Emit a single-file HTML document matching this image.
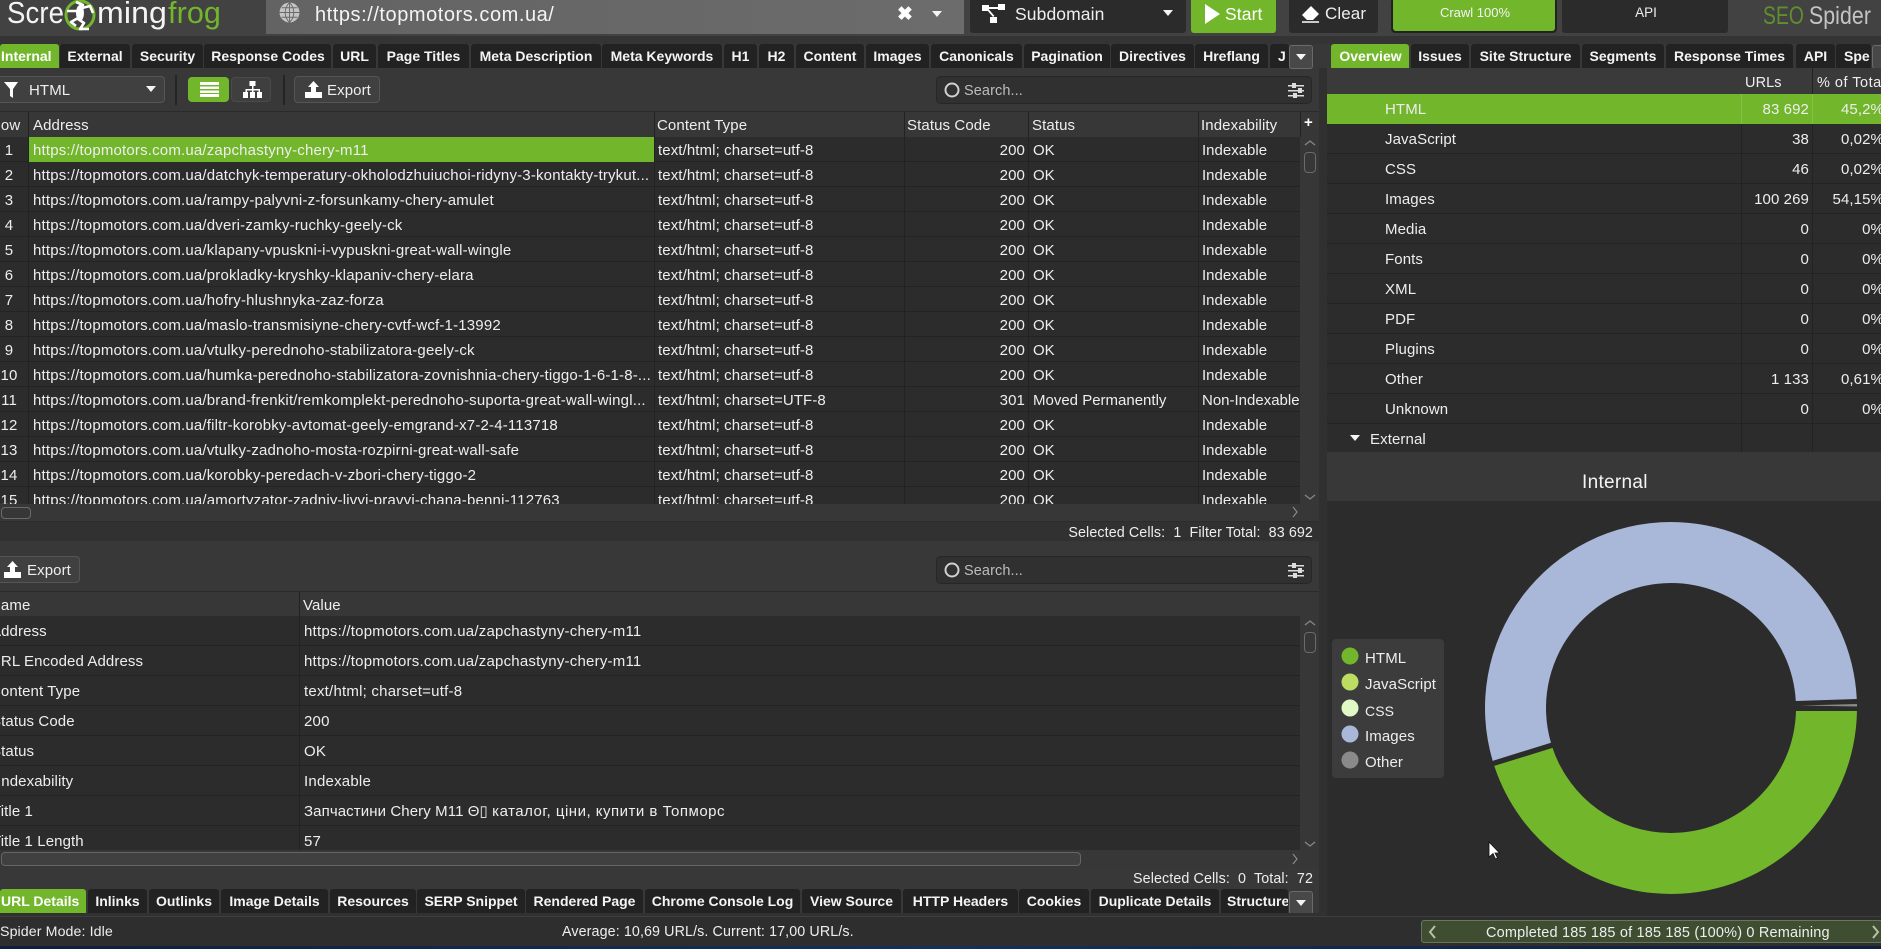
<!DOCTYPE html>
<html><head><meta charset="utf-8"><title>SEO Spider</title>
<style>
html,body{margin:0;padding:0;width:1881px;height:949px;overflow:hidden;background:#383838}
body{position:relative;font:15px/1 "Liberation Sans",sans-serif;color:#eee;letter-spacing:.1px}
div,span,svg{position:absolute;box-sizing:border-box}
span{white-space:nowrap}
b{font-weight:normal;letter-spacing:.5px}
.t{top:44px;height:24px;background:#222;border-radius:3px 3px 0 0;font-weight:bold;font-size:14px;line-height:25px;text-align:center;color:#f4f4f4;letter-spacing:0;overflow:hidden;white-space:nowrap}
.t.a{background:#72b62b;color:#fff}
.b{top:889px;line-height:24px}
.r{left:0;width:1300px;height:25px;background:#2c2c2c;border-bottom:1px solid #232323;line-height:27px}
.r span{top:0}
.n{left:0;width:18px;text-align:center}.ad{left:33px;letter-spacing:.18px}.ct{left:658px}.sc{left:960px;width:65px;text-align:right}.st{left:1033px;letter-spacing:0}.ix{left:1202px;letter-spacing:0}
.v{position:absolute;top:0;bottom:0;width:1px;background:#232323}
.h{line-height:28px;top:0}
.q{left:0;width:1300px;height:30px;background:#2c2c2c;border-bottom:1px solid #232323;line-height:32px}
.q span{top:0}
.q span.w{left:304px;letter-spacing:.22px}
.p{left:1327px;width:554px;height:30px;background:#2c2c2c;border-bottom:1px solid #232323;line-height:31px;overflow:hidden}
.p span{top:0}
.l{left:58px}.u{left:414px;width:68px;text-align:right}.c{left:485px;width:72px;text-align:right}
.btn{border:1px solid #555;border-radius:4px;background:#404040}
.dd{background:#2b2b2b;top:0;height:33px;border-radius:0 0 3px 3px}
.tri{width:0;height:0;border-left:5.5px solid transparent;border-right:5.5px solid transparent;border-top:6px solid #f4f4f4}
.mb{width:24px;height:24px;top:46px;background:#484848;border:1px solid #6a6a6a;border-radius:3px}
.lg{left:1365px;font-size:15px}
</style></head><body>

<!-- top bar -->
<div style="left:0;top:0;width:1881px;height:36px;background:#424242"></div>
<div style="left:0;top:36px;width:1881px;height:8px;background:#343434"></div>
<svg style="left:0;top:0" width="230" height="36" font-family="Liberation Sans" font-size="31">
<text x="7" y="23" fill="#f4f4f4" textLength="57" lengthAdjust="spacingAndGlyphs">Scre</text>
<text x="97" y="23" fill="#f4f4f4" textLength="70" lengthAdjust="spacingAndGlyphs">ming</text>
<text x="168" y="23" fill="#72b62b" textLength="53" lengthAdjust="spacingAndGlyphs">frog</text>
<circle cx="80" cy="15" r="14" fill="none" stroke="#72b62b" stroke-width="3"/>
<path d="M76 2L83 5L80 12L78 20M82 8L90 6L93 13M78 11L67 11M78 18L71 22L76 26M78 19L84 23L80 29L89 29" fill="none" stroke="#fff" stroke-width="2.6" stroke-linejoin="round"/>
<ellipse cx="80" cy="13" rx="4" ry="8" fill="#fff"/>
</svg>
<div style="left:266px;top:0;width:698px;height:34px;background:linear-gradient(90deg,#636363,#6c6c6c)"></div>
<svg style="left:279px;top:2px" width="21" height="21" viewBox="0 0 20 20" fill="none"><circle cx="10" cy="10" r="9.500" fill="#c4c4c4"/><path d="M10 .5v19M.5 10h19M2.500 5.500h15M2.500 14.500h15M10 .5c-5.500 5.500-5.500 13.500 0 19M10 .5c5.500 5.500 5.500 13.500 0 19" stroke="#6a6a6a" stroke-width=".9"/></svg>
<span style="left:315px;top:4px;font-size:20px;letter-spacing:.55px;line-height:23px;color:#f4f4f4">https://topmotors.com.ua/</span>
<span style="left:897px;top:5px;font-size:19px;font-weight:bold;line-height:20px;color:#fff">✖</span>
<div class="tri" style="left:932px;top:11px"></div>

<div class="dd" style="left:970px;width:216px"></div>
<svg style="left:982px;top:3px" width="26" height="20" viewBox="0 0 26 20" fill="#fff"><rect x="0" y="2" width="7" height="6"/><rect x="16" y="1" width="7" height="6"/><rect x="8" y="14" width="7" height="7"/><path d="M6 4h11v2H6zM5 7l6 7 1.500-1-6-7z"/></svg>
<span style="left:1015px;top:4px;font-size:17.5px;line-height:20px">Subdomain</span>
<div class="tri" style="left:1163px;top:10px"></div>

<div class="dd" style="left:1191px;width:85px;background:#72b62b"></div>
<svg style="left:1204px;top:4px" width="18" height="20"><path d="M1 0l15 10L1 20z" fill="#fff"/></svg>
<span style="left:1225px;top:4px;font-size:17.5px;line-height:20px;color:#fff">Start</span>
<div class="dd" style="left:1289px;width:89px"></div>
<svg style="left:1301px;top:5px" width="20" height="18" viewBox="0 0 20 18"><path d="M1 10L10 1l8 8-6 6H6z" fill="#fff"/><path d="M1 17h17" stroke="#fff" stroke-width="1.500"/></svg>
<span style="left:1325px;top:4px;font-size:17px;line-height:20px">Clear</span>
<div style="left:1391px;top:-2px;width:166px;height:35px;background:#222;border-radius:4px"></div>
<div style="left:1393px;top:0;width:162px;height:31px;background:#72b62b;border-radius:0 0 3px 3px;font-size:13px;line-height:26px;text-align:center;letter-spacing:0;color:#f4f4f4;padding-left:2px">Crawl 100%</div>
<div class="dd" style="left:1562px;width:166px;font-size:13.5px;line-height:26px;text-align:center;letter-spacing:0;padding-left:2px">API</div>
<svg style="left:1755px;top:0" width="126" height="36" font-family="Liberation Sans" font-size="25">
<text x="8" y="24" fill="#5f8f2e" textLength="41" lengthAdjust="spacingAndGlyphs">SEO</text>
<text x="54" y="24" fill="#c4c4c4" textLength="62" lengthAdjust="spacingAndGlyphs">Spider</text>
</svg>

<!-- left tabs -->
<div class="t a" style="left:0;width:59px;text-align:left;padding-left:1px">Internal</div>
<div class="t" style="left:60px;width:70px">External</div>
<div class="t" style="left:132px;width:71px">Security</div>
<div class="t" style="left:204px;width:127px;padding-left:1px">Response Codes</div>
<div class="t" style="left:333px;width:43px">URL</div>
<div class="t" style="left:378px;width:91px">Page Titles</div>
<div class="t" style="left:471px;width:130px">Meta Description</div>
<div class="t" style="left:602px;width:120px">Meta Keywords</div>
<div class="t" style="left:724px;width:33px">H1</div>
<div class="t" style="left:759px;width:35px">H2</div>
<div class="t" style="left:796px;width:68px">Content</div>
<div class="t" style="left:866px;width:63px">Images</div>
<div class="t" style="left:931px;width:91px">Canonicals</div>
<div class="t" style="left:1024px;width:86px">Pagination</div>
<div class="t" style="left:1111px;width:83px">Directives</div>
<div class="t" style="left:1195px;width:73px">Hreflang</div>
<div class="t" style="left:1270px;width:19px;text-align:left;padding-left:8px">J</div>
<div class="mb" style="left:1289px;top:45px"></div><div class="tri" style="left:1296px;top:54px"></div>

<!-- left toolbar -->
<div class="btn" style="left:-6px;top:76px;width:171px;height:27px"></div>
<svg style="left:4px;top:82px" width="16" height="16"><path d="M0 0h14L9 7v9L6 14V7z" fill="#fff"/></svg>
<span style="left:29px;top:82px;font-size:15px;line-height:18px">HTML</span>
<div class="tri" style="left:146px;top:86px"></div>
<div style="left:175px;top:75px;width:2px;height:30px;background:#242424"></div>
<div style="left:188px;top:77px;width:41px;height:25px;background:#72b62b;border-radius:4px"></div>
<svg style="left:200px;top:82px" width="19" height="15" fill="#fff"><rect width="19" height="3"/><rect y="4.500" width="19" height="2.500"/><rect y="8.500" width="19" height="2.500"/><rect y="12" width="19" height="3"/></svg>
<div class="btn" style="left:231px;top:77px;width:40px;height:25px;background:#3f3f3f;border-color:#4a4a4a"></div>
<svg style="left:243px;top:81px" width="19" height="17" fill="#fff"><rect x="6.500" y="0" width="6" height="5"/><rect x="0" y="11" width="5" height="6"/><rect x="7" y="11" width="5" height="6"/><rect x="14" y="11" width="5" height="6"/><path d="M9 5h1.500v3H17v3h-1.500V9.500h-5V11H9V9.500H4V11H2.500V8H9z"/></svg>
<div style="left:283px;top:75px;width:2px;height:30px;background:#242424"></div>
<div class="btn" style="left:294px;top:76px;width:86px;height:27px"></div>
<svg style="left:305px;top:81px" width="17" height="17" fill="#fff"><path d="M8.500 0L14 6h-3v6H6V6H3z"/><rect x="0" y="11" width="17" height="6"/></svg>
<span style="left:327px;top:82px;font-size:15px;line-height:18px">Export</span>
<div style="left:936px;top:76px;width:376px;height:28px;background:#303030;border:1px solid #262626;border-radius:5px"></div>
<svg style="left:944px;top:82px" width="16" height="16" fill="none" stroke="#d0d0d0" stroke-width="2"><circle cx="8" cy="8" r="6.500"/></svg>
<span style="left:964px;top:83px;font-size:14.500px;line-height:17px;color:#bdbdbd">Search...</span>
<svg style="left:1288px;top:83px" width="17" height="15" fill="#ddd"><rect y="2" width="16" height="1.500"/><rect x="4" y="0" width="4" height="5"/><rect y="7" width="16" height="1.500"/><rect x="10" y="5" width="4" height="5"/><rect y="12" width="16" height="1.500"/><rect x="5" y="10" width="4" height="5"/></svg>

<!-- main table header -->
<div style="left:0;top:111px;width:1319px;height:26px;background:#373737;border-top:1px solid #2a2a2a;overflow:hidden">
<span class="h" style="left:-10px">Row</span><span class="h" style="left:33px">Address</span><span class="h" style="left:657px">Content Type</span><span class="h" style="left:907px">Status Code</span><span class="h" style="left:1032px">Status</span><span class="h" style="left:1201px">Indexability</span>
<span class="h" style="left:1304px;font-weight:bold;font-size:15px;color:#fff;line-height:22px">+</span>
<i class="v" style="left:28px"></i><i class="v" style="left:654px"></i><i class="v" style="left:904px"></i><i class="v" style="left:1028px"></i><i class="v" style="left:1198px"></i><i class="v" style="left:1300px"></i>
</div>

<!-- main table rows -->
<div style="left:0;top:137px;width:1300px;height:367px;overflow:hidden">
<div class="r" style="top:0"><span class="n">1</span><div style="left:28px;top:0;width:626px;height:25px;background:#72b62b"></div><span class="ad">https://topmotors.com.ua/zapchastyny-chery-m11</span><span class="ct">text/html; charset=utf-8</span><span class="sc">200</span><span class="st">OK</span><span class="ix">Indexable</span></div>
<div class="r" style="top:25px"><span class="n">2</span><span class="ad">https://topmotors.com.ua/datchyk-temperatury-okholodzhuiuchoi-ridyny-3-kontakty-trykut...</span><span class="ct">text/html; charset=utf-8</span><span class="sc">200</span><span class="st">OK</span><span class="ix">Indexable</span></div>
<div class="r" style="top:50px"><span class="n">3</span><span class="ad">https://topmotors.com.ua/rampy-palyvni-z-forsunkamy-chery-amulet</span><span class="ct">text/html; charset=utf-8</span><span class="sc">200</span><span class="st">OK</span><span class="ix">Indexable</span></div>
<div class="r" style="top:75px"><span class="n">4</span><span class="ad">https://topmotors.com.ua/dveri-zamky-ruchky-geely-ck</span><span class="ct">text/html; charset=utf-8</span><span class="sc">200</span><span class="st">OK</span><span class="ix">Indexable</span></div>
<div class="r" style="top:100px"><span class="n">5</span><span class="ad">https://topmotors.com.ua/klapany-vpuskni-i-vypuskni-great-wall-wingle</span><span class="ct">text/html; charset=utf-8</span><span class="sc">200</span><span class="st">OK</span><span class="ix">Indexable</span></div>
<div class="r" style="top:125px"><span class="n">6</span><span class="ad">https://topmotors.com.ua/prokladky-kryshky-klapaniv-chery-elara</span><span class="ct">text/html; charset=utf-8</span><span class="sc">200</span><span class="st">OK</span><span class="ix">Indexable</span></div>
<div class="r" style="top:150px"><span class="n">7</span><span class="ad">https://topmotors.com.ua/hofry-hlushnyka-zaz-forza</span><span class="ct">text/html; charset=utf-8</span><span class="sc">200</span><span class="st">OK</span><span class="ix">Indexable</span></div>
<div class="r" style="top:175px"><span class="n">8</span><span class="ad">https://topmotors.com.ua/maslo-transmisiyne-chery-cvtf-wcf-1-13992</span><span class="ct">text/html; charset=utf-8</span><span class="sc">200</span><span class="st">OK</span><span class="ix">Indexable</span></div>
<div class="r" style="top:200px"><span class="n">9</span><span class="ad">https://topmotors.com.ua/vtulky-perednoho-stabilizatora-geely-ck</span><span class="ct">text/html; charset=utf-8</span><span class="sc">200</span><span class="st">OK</span><span class="ix">Indexable</span></div>
<div class="r" style="top:225px"><span class="n">10</span><span class="ad">https://topmotors.com.ua/humka-perednoho-stabilizatora-zovnishnia-chery-tiggo-1-6-1-8-...</span><span class="ct">text/html; charset=utf-8</span><span class="sc">200</span><span class="st">OK</span><span class="ix">Indexable</span></div>
<div class="r" style="top:250px"><span class="n">11</span><span class="ad">https://topmotors.com.ua/brand-frenkit/remkomplekt-perednoho-suporta-great-wall-wingl...</span><span class="ct">text/html; charset=UTF-8</span><span class="sc">301</span><span class="st">Moved Permanently</span><span class="ix">Non-Indexable</span></div>
<div class="r" style="top:275px"><span class="n">12</span><span class="ad">https://topmotors.com.ua/filtr-korobky-avtomat-geely-emgrand-x7-2-4-113718</span><span class="ct">text/html; charset=utf-8</span><span class="sc">200</span><span class="st">OK</span><span class="ix">Indexable</span></div>
<div class="r" style="top:300px"><span class="n">13</span><span class="ad">https://topmotors.com.ua/vtulky-zadnoho-mosta-rozpirni-great-wall-safe</span><span class="ct">text/html; charset=utf-8</span><span class="sc">200</span><span class="st">OK</span><span class="ix">Indexable</span></div>
<div class="r" style="top:325px"><span class="n">14</span><span class="ad">https://topmotors.com.ua/korobky-peredach-v-zbori-chery-tiggo-2</span><span class="ct">text/html; charset=utf-8</span><span class="sc">200</span><span class="st">OK</span><span class="ix">Indexable</span></div>
<div class="r" style="top:350px"><span class="n">15</span><span class="ad">https://topmotors.com.ua/amortyzator-zadniy-livyi-pravyi-chana-benni-112763</span><span class="ct">text/html; charset=utf-8</span><span class="sc">200</span><span class="st">OK</span><span class="ix">Indexable</span></div>
<i class="v" style="left:28px"></i><i class="v" style="left:654px"></i><i class="v" style="left:904px"></i><i class="v" style="left:1028px"></i><i class="v" style="left:1198px"></i>
</div>
<!-- main scrollbars -->
<div style="left:1300px;top:137px;width:19px;height:367px;background:#373737"></div>
<svg style="left:1304px;top:139px" width="12" height="8" fill="none" stroke="#8a8a8a" stroke-width="1.200"><path d="M1 6l5-4 5 4"/></svg>
<div style="left:1304px;top:152px;width:12px;height:21px;border:1.500px solid #6a6a6a;border-radius:4px"></div>
<svg style="left:1304px;top:493px" width="12" height="8" fill="none" stroke="#8a8a8a" stroke-width="1.200"><path d="M1 2l5 4 5-4"/></svg>
<div style="left:0;top:504px;width:1319px;height:18px;background:#373737;border-bottom:1px solid #2c2c2c"></div>
<div style="left:1px;top:507px;width:30px;height:12px;border:1.500px solid #6a6a6a;border-radius:4px"></div>
<svg style="left:1291px;top:506px" width="8" height="12" fill="none" stroke="#8a8a8a" stroke-width="1.200"><path d="M2 1l4 5-4 5"/></svg>
<div style="left:0;top:522px;width:1319px;height:19px;background:#313131"></div>
<span style="right:568px;top:525px;line-height:17px;font-size:14.300px">Selected Cells:&nbsp; 1&nbsp; Filter Total:&nbsp; 83 692</span>

<!-- lower panel toolbar -->
<div class="btn" style="left:-6px;top:556px;width:86px;height:27px"></div>
<svg style="left:4px;top:561px" width="17" height="17" fill="#fff"><path d="M8.500 0L14 6h-3v6H6V6H3z"/><rect x="0" y="11" width="17" height="6"/></svg>
<span style="left:27px;top:562px;line-height:18px">Export</span>
<div style="left:936px;top:556px;width:376px;height:28px;background:#303030;border:1px solid #262626;border-radius:5px"></div>
<svg style="left:944px;top:562px" width="16" height="16" fill="none" stroke="#d0d0d0" stroke-width="2"><circle cx="8" cy="8" r="6.500"/></svg>
<span style="left:964px;top:563px;font-size:14.500px;line-height:17px;color:#bdbdbd">Search...</span>
<svg style="left:1288px;top:563px" width="17" height="15" fill="#ddd"><rect y="2" width="16" height="1.500"/><rect x="4" y="0" width="4" height="5"/><rect y="7" width="16" height="1.500"/><rect x="10" y="5" width="4" height="5"/><rect y="12" width="16" height="1.500"/><rect x="5" y="10" width="4" height="5"/></svg>

<!-- lower table -->
<div style="left:0;top:591px;width:1319px;height:25px;background:#373737;border-top:1px solid #2a2a2a;overflow:hidden">
<span class="h" style="left:-10px">Name</span><span class="h" style="left:303px">Value</span><i class="v" style="left:299px"></i>
</div>
<div style="left:0;top:616px;width:1300px;height:234px;overflow:hidden">
<div class="q" style="top:0"><span style="left:-9px">Address</span><span class="w">https://topmotors.com.ua/zapchastyny-chery-m11</span></div>
<div class="q" style="top:30px"><span style="left:-10px">URL Encoded Address</span><span class="w">https://topmotors.com.ua/zapchastyny-chery-m11</span></div>
<div class="q" style="top:60px"><span style="left:-10px">Content Type</span><span class="w">text/html; charset=utf-8</span></div>
<div class="q" style="top:90px"><span style="left:-9px">Status Code</span><span class="w">200</span></div>
<div class="q" style="top:120px"><span style="left:-9px">Status</span><span class="w">OK</span></div>
<div class="q" style="top:150px"><span style="left:-3px">Indexability</span><span class="w">Indexable</span></div>
<div class="q" style="top:180px"><span style="left:-8px">Title 1</span><span class="w" style="letter-spacing:.1px">Запчастини Chery M11 Θ▯ <b>каталог, ціни, купити в Топморс</b></span></div>
<div class="q" style="top:210px"><span style="left:-8px">Title 1 Length</span><span class="w">57</span></div>
<i class="v" style="left:299px"></i>
</div>
<div style="left:1300px;top:616px;width:19px;height:234px;background:#373737"></div>
<svg style="left:1304px;top:619px" width="12" height="8" fill="none" stroke="#8a8a8a" stroke-width="1.200"><path d="M1 6l5-4 5 4"/></svg>
<div style="left:1304px;top:632px;width:12px;height:21px;border:1.500px solid #6a6a6a;border-radius:4px"></div>
<svg style="left:1304px;top:840px" width="12" height="8" fill="none" stroke="#8a8a8a" stroke-width="1.200"><path d="M1 2l5 4 5-4"/></svg>
<div style="left:0;top:850px;width:1319px;height:18px;background:#373737"></div>
<div style="left:1px;top:852px;width:1080px;height:14px;background:#404040;border:1.500px solid #666;border-radius:4px"></div>
<svg style="left:1291px;top:853px" width="8" height="12" fill="none" stroke="#8a8a8a" stroke-width="1.200"><path d="M2 1l4 5-4 5"/></svg>
<span style="right:568px;top:871px;line-height:17px;font-size:14.300px">Selected Cells:&nbsp; 0&nbsp; Total:&nbsp; 72</span>

<!-- bottom tabs -->
<div class="t a b" style="left:0;width:86px;text-align:left;padding-left:1px">URL Details</div>
<div class="t b" style="left:88px;width:59px">Inlinks</div>
<div class="t b" style="left:149px;width:70px">Outlinks</div>
<div class="t b" style="left:221px;width:107px">Image Details</div>
<div class="t b" style="left:330px;width:86px">Resources</div>
<div class="t b" style="left:417px;width:108px">SERP Snippet</div>
<div class="t b" style="left:526px;width:117px">Rendered Page</div>
<div class="t b" style="left:645px;width:155px">Chrome Console Log</div>
<div class="t b" style="left:802px;width:99px">View Source</div>
<div class="t b" style="left:903px;width:115px">HTTP Headers</div>
<div class="t b" style="left:1019px;width:70px">Cookies</div>
<div class="t b" style="left:1091px;width:128px">Duplicate Details</div>
<div class="t b" style="left:1221px;width:67px;text-align:left;padding-left:6px">Structured</div>
<div class="mb" style="left:1289px;top:891px"></div><div class="tri" style="left:1296px;top:900px"></div>

<!-- right tabs -->
<div class="t a" style="left:1331px;width:78px;padding-left:1px">Overview</div>
<div class="t" style="left:1411px;width:58px">Issues</div>
<div class="t" style="left:1471px;width:109px">Site Structure</div>
<div class="t" style="left:1582px;width:82px">Segments</div>
<div class="t" style="left:1666px;width:127px">Response Times</div>
<div class="t" style="left:1796px;width:39px">API</div>
<div class="t" style="left:1836px;width:35px;text-align:left;padding-left:8px">Spe</div>
<div class="mb" style="left:1872px;top:45px"></div>

<!-- right table -->
<div style="left:1319px;top:68px;width:8px;height:848px;background:#303030"></div>
<div style="left:1327px;top:68px;width:554px;height:26px;background:#3a3a3a;overflow:hidden">
<span style="left:418px;top:7px;line-height:17px;font-size:14.500px">URLs</span>
<span style="left:490px;top:7px;line-height:17px;font-size:14.500px;letter-spacing:.5px">% of Total</span>
<i class="v" style="left:485px"></i>
</div>
<div class="p" style="top:94px;background:#72b62b;border:0"><span class="l">HTML</span><span class="u">83 692</span><span class="c">45,2%</span></div>
<div class="p" style="top:124px"><span class="l">JavaScript</span><span class="u">38</span><span class="c">0,02%</span></div>
<div class="p" style="top:154px"><span class="l">CSS</span><span class="u">46</span><span class="c">0,02%</span></div>
<div class="p" style="top:184px"><span class="l">Images</span><span class="u">100 269</span><span class="c">54,15%</span></div>
<div class="p" style="top:214px"><span class="l">Media</span><span class="u">0</span><span class="c">0%</span></div>
<div class="p" style="top:244px"><span class="l">Fonts</span><span class="u">0</span><span class="c">0%</span></div>
<div class="p" style="top:274px"><span class="l">XML</span><span class="u">0</span><span class="c">0%</span></div>
<div class="p" style="top:304px"><span class="l">PDF</span><span class="u">0</span><span class="c">0%</span></div>
<div class="p" style="top:334px"><span class="l">Plugins</span><span class="u">0</span><span class="c">0%</span></div>
<div class="p" style="top:364px"><span class="l">Other</span><span class="u">1 133</span><span class="c">0,61%</span></div>
<div class="p" style="top:394px"><span class="l">Unknown</span><span class="u">0</span><span class="c">0%</span></div>
<div class="p" style="top:424px;height:28px;border:0"><span style="left:43px">External</span><div class="tri" style="left:23px;top:11px"></div></div>
<div style="left:1741px;top:94px;width:1px;height:30px;background:#86c048"></div>
<div style="left:1812px;top:94px;width:1px;height:30px;background:#86c048"></div>
<div style="left:1741px;top:124px;width:1px;height:328px;background:#232323"></div>
<div style="left:1812px;top:124px;width:1px;height:328px;background:#232323"></div>

<!-- chart -->
<div style="left:1327px;top:452px;width:554px;height:49px;background:#383838"></div>
<span style="left:1582px;top:472px;font-size:19px;line-height:22px;color:#f4f4f4;letter-spacing:.3px">Internal</span>
<div style="left:1327px;top:501px;width:554px;height:415px;background:#2c2c2c"></div>
<svg style="left:0;top:0" width="1881" height="949">
<path d="M1856.98 711A186 186 0 0 1 1671 894A186 186 0 0 1 1494.25 765.9L1552.5 747.9A125 125 0 0 0 1671 833A125 125 0 0 0 1795.96 711Z" fill="#72b62b"/>
<path d="M1492.66 760.83A186 186 0 0 1 1671 522A186 186 0 0 1 1856.78 699L1795.8 701A125 125 0 0 0 1671 583A125 125 0 0 0 1550.93 742.73Z" fill="#a9b7d8"/>
<path d="M1857 704V706.500L1800 705.500Z" fill="#8a8a8a"/>
</svg>
<div style="left:1332px;top:639px;width:112px;height:139px;background:#3c3c3c;border-radius:4px"></div>
<svg style="left:1341px;top:647px" width="18" height="124"><circle cx="9" cy="9" r="8.500" fill="#72b62b"/><circle cx="9" cy="35" r="8.500" fill="#bcdc62"/><circle cx="9" cy="61" r="8.500" fill="#e1f9c5"/><circle cx="9" cy="87" r="8.500" fill="#a9b7d8"/><circle cx="9" cy="113" r="8.500" fill="#8a8a8a"/></svg>
<span class="lg" style="top:650px;line-height:18px">HTML</span>
<span class="lg" style="top:676px;line-height:18px">JavaScript</span>
<span class="lg" style="top:702px;line-height:18px;font-size:14px">CSS</span>
<span class="lg" style="top:728px;line-height:18px">Images</span>
<span class="lg" style="top:754px;line-height:18px">Other</span>
<svg style="left:1488px;top:841px" width="13" height="20"><path d="M1 1v15l4-3.500 2.500 5.500 2-1-2.500-5h4.500z" fill="#fff" stroke="#111" stroke-width=".8"/></svg>

<!-- status bar -->
<div style="left:0;top:913px;width:1327px;height:3px;background:#313131"></div>
<div style="left:0;top:916px;width:1881px;height:30px;background:#2e2e2e;border-top:1px solid #3e3e3e"></div>
<span style="left:0;top:924px;line-height:17px;font-size:14.200px">Spider Mode: Idle</span>
<span style="left:562px;top:924px;line-height:17px;font-size:14.300px">Average: 10,69 URL/s. Current: 17,00 URL/s.</span>
<div style="left:1421px;top:920px;width:470px;height:23px;background:#3f4e31;border:1px solid #687660;border-radius:3px"></div>
<svg style="left:1428px;top:925px" width="10" height="14" fill="none" stroke="#b8c0a8" stroke-width="2"><path d="M7 1L2 7l5 6"/></svg>
<svg style="left:1871px;top:925px" width="10" height="14" fill="none" stroke="#b8c0a8" stroke-width="2"><path d="M2 1l5 6-5 6"/></svg>
<span style="left:1486px;top:925px;line-height:17px;font-size:14.500px;letter-spacing:.18px">Completed 185 185 of 185 185 (100%) 0 Remaining</span>
<div style="left:0;top:946px;width:1881px;height:3px;background:linear-gradient(90deg,#0f1f3c,#14305c 50%,#0f1f3c)"></div>
</body></html>
